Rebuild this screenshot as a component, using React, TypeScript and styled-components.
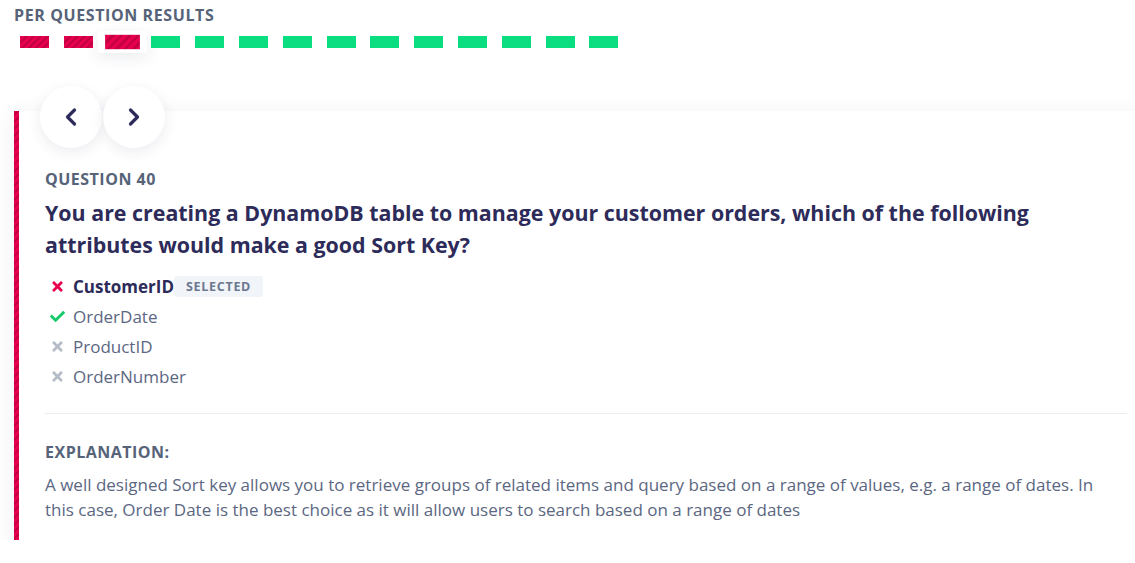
import React from "react";
import styled, { createGlobalStyle, css } from "styled-components";
import { FaCheck, FaTimes } from "react-icons/fa";

type Status = "wrong" | "right";

interface Option {
    label: string;
    state: "selectedWrong" | "correct" | "neutral";
}

const results: Status[] = [
    "wrong", "wrong", "wrong",
    "right", "right", "right", "right", "right", "right",
    "right", "right", "right", "right", "right",
];

const options: Option[] = [
    { label: "CustomerID", state: "selectedWrong" },
    { label: "OrderDate", state: "correct" },
    { label: "ProductID", state: "neutral" },
    { label: "OrderNumber", state: "neutral" },
];

const GlobalStyle = createGlobalStyle`
  html, body {
    margin: 0;
    background: #ffffff;
    overflow: hidden;
  }
  body {
    font-family: "Open Sans", "Noto Sans", sans-serif;
    color: #5b6782;
  }
`;

const Chevron = ({ dir }: { dir: "left" | "right" }) => (
    <svg width="14" height="20" viewBox="0 0 14 20" fill="none">
        <polyline
            points={dir === "left" ? "10.5,3 3.5,10 10.5,17" : "3.5,3 10.5,10 3.5,17"}
            stroke="#2d2b5c"
            strokeWidth="3.2"
            strokeLinecap="round"
            strokeLinejoin="round"
        />
    </svg>
);

const App: React.FC = () => {
    const activeIndex = 2;

    return (
        <Page>
            <GlobalStyle />
            <SectionTitle>PER QUESTION RESULTS</SectionTitle>
            <ResultsRow>
                {results.map((status, index) => (
                    <Cell key={index} $active={index === activeIndex}>
                        <Bar $status={status} />
                    </Cell>
                ))}
            </ResultsRow>

            <Card>
                <Stripe />
                <CardBody>
                    <NavGroup>
                        <NavButton aria-label="previous">
                            <Chevron dir="left" />
                        </NavButton>
                        <NavButton aria-label="next">
                            <Chevron dir="right" />
                        </NavButton>
                    </NavGroup>

                    <Label>QUESTION 40</Label>
                    <Question>
                        You are creating a DynamoDB table to manage your customer orders, which of the following
                        attributes would make a good Sort Key?
                    </Question>

                    <OptionList>
                        {options.map((option) => (
                            <OptionItem key={option.label}>
                                <OptionIcon $state={option.state}>
                                    {option.state === "correct" ? <FaCheck /> : <FaTimes />}
                                </OptionIcon>
                                <OptionText $selected={option.state === "selectedWrong"}>
                                    {option.label}
                                </OptionText>
                                {option.state === "selectedWrong" && <Badge>SELECTED</Badge>}
                            </OptionItem>
                        ))}
                    </OptionList>

                    <Divider />

                    <ExplanationLabel>EXPLANATION:</ExplanationLabel>
                    <Explanation>
                        A well designed Sort key allows you to retrieve groups of related items and query based on a
                        range of values, e.g. a range of dates. In this case, Order Date is the best choice as it will
                        allow users to search based on a range of dates
                    </Explanation>
                </CardBody>
            </Card>
        </Page>
    );
};

const stripes = (base: string, dark: string) => css`
  background: repeating-linear-gradient(
    -45deg,
    ${base} 0px,
    ${base} 3px,
    ${dark} 3px,
    ${dark} 5px
  );
`;

const Page = styled.div`
  padding: 5px 0 0 14px;
`;

const SectionTitle = styled.div`
  font-size: 16px;
  font-weight: 700;
  letter-spacing: 0.6px;
  color: #566378;
  line-height: 21px;
`;

const ResultsRow = styled.div`
  display: flex;
  align-items: center;
  gap: 2.8px;
  margin-top: 7px;
`;

const Cell = styled.div<{ $active: boolean }>`
  padding: 3px 6px;
  background: transparent;
  ${({ $active }) =>
    $active &&
    css`
      background: #ffffff;
      transform: scale(1.2);
      box-shadow: 0 4px 12px rgba(30, 40, 80, 0.09);
    `}
`;

const Bar = styled.div<{ $status: Status }>`
  width: 29px;
  height: 12px;
  ${({ $status }) =>
    $status === "wrong" ? stripes("#e6004e", "#c40043") : "background: #0bde80;"}
`;

const Card = styled.div`
  display: flex;
  margin-top: 60px;
  width: calc(100% + 18px);
  background: #ffffff;
  box-shadow: 0 6px 24px rgba(30, 40, 80, 0.08);
`;

const Stripe = styled.div`
  width: 5px;
  flex-shrink: 0;
  ${stripes("#e6004e", "#c40043")}
`;

const CardBody = styled.div`
  position: relative;
  flex: 1;
  padding: 56px 26px 18px 26px;
`;

const NavGroup = styled.div`
  position: absolute;
  top: -25px;
  left: 21px;
  display: flex;
  gap: 1px;
`;

const NavButton = styled.button`
  width: 62px;
  height: 62px;
  border-radius: 50%;
  border: none;
  background: #ffffff;
  box-shadow: 0 4px 14px rgba(30, 40, 80, 0.09);
  display: flex;
  align-items: center;
  justify-content: center;
  cursor: pointer;
  padding: 0;
`;

const Label = styled.div`
  font-size: 16px;
  font-weight: 700;
  letter-spacing: 0.5px;
  color: #566378;
  line-height: 24px;
`;

const Question = styled.div`
  margin-top: 6px;
  font-size: 21.4px;
  font-weight: 700;
  line-height: 32px;
  color: #2d2b59;
  max-width: 1010px;
`;

const OptionList = styled.ul`
  list-style: none;
  margin: 10px 0 0 0;
  padding: 0;
`;

const OptionItem = styled.li`
  display: flex;
  align-items: center;
  height: 30px;
`;

const OptionIcon = styled.span<{ $state: Option["state"] }>`
  display: flex;
  width: 28px;
  padding-left: 5px;
  box-sizing: border-box;
  font-size: 15px;
  color: ${({ $state }) =>
    $state === "selectedWrong" ? "#e8004f" : $state === "correct" ? "#14c96a" : "#b4bcc8"};
`;

const OptionText = styled.span<{ $selected: boolean }>`
  font-size: 17px;
  font-weight: ${({ $selected }) => ($selected ? 700 : 400)};
  color: ${({ $selected }) => ($selected ? "#2d2b59" : "#5b6782")};
`;

const Badge = styled.span`
  display: inline-flex;
  align-items: center;
  height: 21px;
  margin-left: 0;
  padding: 0 12px;
  border-radius: 3px;
  background: #f1f4f8;
  color: #6b7890;
  font-size: 12.5px;
  font-weight: 700;
  letter-spacing: 0.7px;
`;

const Divider = styled.div`
  margin-top: 22px;
  height: 1px;
  background: #ececef;
`;

const ExplanationLabel = styled.div`
  margin-top: 26px;
  font-size: 16px;
  font-weight: 700;
  letter-spacing: 0.5px;
  line-height: 24px;
  color: #566378;
`;

const Explanation = styled.p`
  margin: 8px 0 0 0;
  font-size: 17px;
  line-height: 25px;
  color: #5b6782;
  max-width: 1062px;
`;

export default App;
